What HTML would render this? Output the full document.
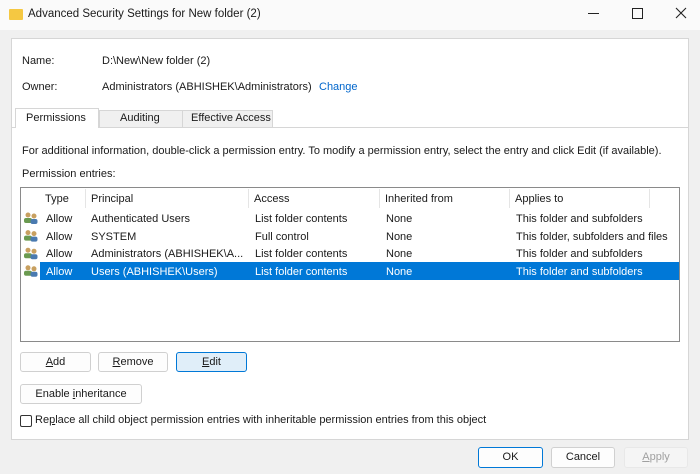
<html><head><style>
body{margin:0;width:700px;height:474px;background:#f0f0f0;font-family:"Liberation Sans",sans-serif;font-size:11px;color:#1a1a1a;position:relative;overflow:hidden}
.a{position:absolute;white-space:nowrap}
.btn{position:absolute;background:#fdfdfd;border:1px solid #d0d0d0;border-radius:3px;text-align:center;box-sizing:border-box;line-height:18px}
.hd{position:absolute;top:189px;height:19px;border-right:1px solid #e5e5e5;line-height:21px;padding-left:5px;box-sizing:border-box}
</style></head><body>
<div class="a" style="left:0;top:0;width:700px;height:30px;background:#fafafa"></div>
<div class="a" style="left:9px;top:9px;width:14px;height:11px;background:#f5c842;border-radius:1px"></div>
<div class="a" style="left:28px;top:8px;font-size:11.5px">Advanced Security Settings for New folder (2)</div>
<div class="a" style="left:588px;top:13px;width:11px;height:1px;background:#222"></div>
<div class="a" style="left:632px;top:8px;width:9px;height:9px;border:1px solid #222"></div>
<svg class="a" style="left:675px;top:7px" width="12" height="12"><path d="M1 1L11 11M11 1L1 11" stroke="#222" stroke-width="1.1"/></svg>
<div class="a" style="left:11px;top:38px;width:678px;height:402px;background:#fff;border:1px solid #d6d6d6;box-sizing:border-box"></div>
<div class="a" style="left:22px;top:55px">Name:</div>
<div class="a" style="left:102px;top:55px">D:\New\New folder (2)</div>
<div class="a" style="left:22px;top:81px">Owner:</div>
<div class="a" style="left:102px;top:81px">Administrators (ABHISHEK\Administrators)</div>
<div class="a" style="left:319px;top:81px;color:#0066cc">Change</div>
<div class="a" style="left:11px;top:127px;width:678px;height:1px;background:#d6d6d6"></div>
<div class="a" style="left:15px;top:108px;width:84px;height:20px;background:#fff;border:1px solid #d6d6d6;border-bottom:none;box-sizing:border-box"></div>
<div class="a" style="left:26px;top:112px">Permissions</div>
<div class="a" style="left:99px;top:110px;width:174px;height:17px;background:#f0f0f0;border:1px solid #d6d6d6;border-bottom:none;box-sizing:border-box"></div>
<div class="a" style="left:182px;top:110px;width:1px;height:17px;background:#d6d6d6"></div>
<div class="a" style="left:120px;top:112px">Auditing</div>
<div class="a" style="left:191px;top:112px">Effective Access</div>
<div class="a" style="left:22px;top:145px">For additional information, double-click a permission entry. To modify a permission entry, select the entry and click Edit (if available).</div>
<div class="a" style="left:22px;top:168px">Permission entries:</div>
<div class="a" style="left:20px;top:187px;width:660px;height:155px;border:1px solid #8a8a8a;box-sizing:border-box;background:#fff"></div>
<div class="hd" style="left:40px;width:46px">Type</div>
<div class="hd" style="left:86px;width:163px">Principal</div>
<div class="hd" style="left:249px;width:131px">Access</div>
<div class="hd" style="left:380px;width:130px">Inherited from</div>
<div class="hd" style="left:510px;width:140px">Applies to</div>
<div class="a" style="left:40px;top:262px;width:639px;height:18px;background:#0078d7"></div>
<div style="position:absolute;left:0;top:211px;line-height:17.6px">
<div class="a" style="left:46px;top:0">Allow</div><div class="a" style="left:91px;top:0">Authenticated Users</div><div class="a" style="left:255px;top:0">List folder contents</div><div class="a" style="left:386px;top:0">None</div><div class="a" style="left:516px;top:0">This folder and subfolders</div>
<div class="a" style="left:46px;top:17.6px">Allow</div><div class="a" style="left:91px;top:17.6px">SYSTEM</div><div class="a" style="left:255px;top:17.6px">Full control</div><div class="a" style="left:386px;top:17.6px">None</div><div class="a" style="left:516px;top:17.6px">This folder, subfolders and files</div>
<div class="a" style="left:46px;top:35.2px">Allow</div><div class="a" style="left:91px;top:35.2px">Administrators (ABHISHEK\A...</div><div class="a" style="left:255px;top:35.2px">List folder contents</div><div class="a" style="left:386px;top:35.2px">None</div><div class="a" style="left:516px;top:35.2px">This folder and subfolders</div>
<div style="color:#fff"><div class="a" style="left:46px;top:52.8px">Allow</div><div class="a" style="left:91px;top:52.8px">Users (ABHISHEK\Users)</div><div class="a" style="left:255px;top:52.8px">List folder contents</div><div class="a" style="left:386px;top:52.8px">None</div><div class="a" style="left:516px;top:52.8px">This folder and subfolders</div></div>
</div>
<svg class="a" style="left:23px;top:212px" width="16" height="70"><g id="u"><circle cx="5" cy="3" r="2.5" fill="#c8a060"/><rect x="1" y="6" width="8" height="5" rx="2" fill="#6a9a50"/><circle cx="11" cy="4" r="2.5" fill="#c8a060"/><rect x="7.5" y="7" width="7" height="5" rx="2" fill="#4a7ab0"/></g><use href="#u" y="17.6"/><use href="#u" y="35.2"/><use href="#u" y="52.8"/></svg>
<div class="btn" style="left:20px;top:352px;width:71px;height:20px"><u>A</u>dd</div>
<div class="btn" style="left:98px;top:352px;width:70px;height:20px"><u>R</u>emove</div>
<div class="btn" style="left:176px;top:352px;width:71px;height:20px;background:#e0eef9;border-color:#0078d7"><u>E</u>dit</div>
<div class="btn" style="left:20px;top:384px;width:122px;height:20px">Enable <u>i</u>nheritance</div>
<div class="a" style="left:20px;top:415px;width:12px;height:12px;border:1px solid #333;border-radius:2px;box-sizing:border-box"></div>
<div class="a" style="left:35px;top:414px">Re<u>p</u>lace all child object permission entries with inheritable permission entries from this object</div>
<div class="btn" style="left:478px;top:447px;width:65px;height:21px;border-color:#0078d7">OK</div>
<div class="btn" style="left:551px;top:447px;width:64px;height:21px">Cancel</div>
<div class="btn" style="left:624px;top:447px;width:64px;height:21px;background:#f5f5f5;border-color:#e8e8e8;color:#a0a0a0"><u>A</u>pply</div>
</body></html>
